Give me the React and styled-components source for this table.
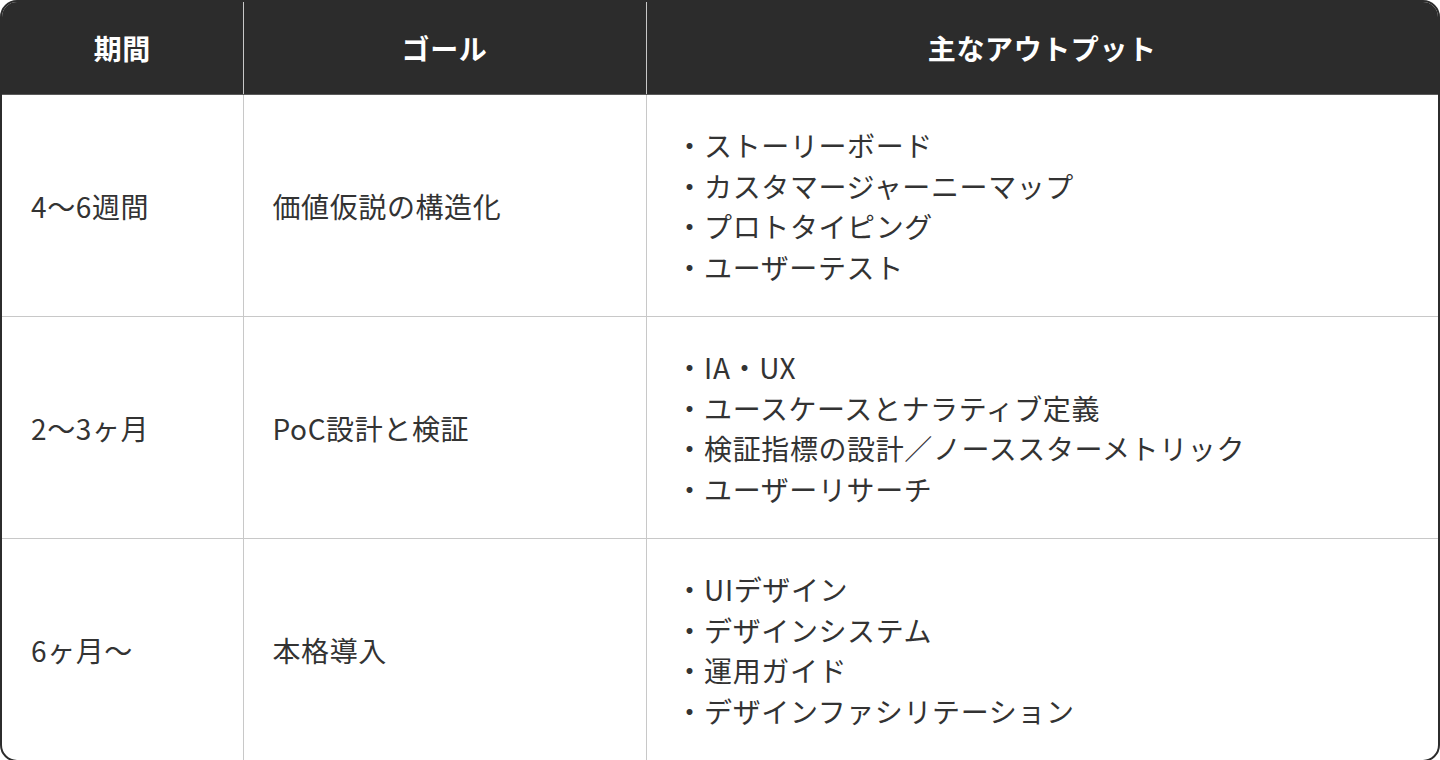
import styled, { createGlobalStyle } from "styled-components";

const GlobalStyle = createGlobalStyle`
  html, body {
    margin: 0;
    padding: 0;
    background: #fff;
  }
  body {
    font-family: "Noto Sans CJK JP", "Noto Sans", sans-serif;
  }
`;

const Frame = styled.div`
  width: 1440px;
  box-sizing: border-box;
  border: 2px solid #2c2c2c;
  border-radius: 17px;
  overflow: hidden;
  background: #fff;
`;

const Table = styled.table`
  width: 100%;
  border-collapse: collapse;
  table-layout: fixed;
`;

const HeadCell = styled.th`
  height: 92px;
  padding: 0;
  background: #2c2c2c;
  color: #fff;
  font-size: 28px;
  font-weight: 700;
  letter-spacing: 0.6px;
  text-align: center;
  border-bottom: 1px solid #5a5a5a;
  & + & {
    border-left: 1px solid #c8c8c8;
  }
`;

const Row = styled.tr`
  & + & td {
    border-top: 1px solid #c8c8c8;
  }
`;

const Cell = styled.td`
  padding: 30px 29px 29px;
  color: #333;
  font-size: 28px;
  line-height: 40.5px;
  letter-spacing: 0.6px;
  vertical-align: middle;
  & + & {
    border-left: 1px solid #c8c8c8;
  }
`;

const List = styled.ul`
  list-style: none;
  margin: 0;
  padding: 0;
`;

const Item = styled.li`
  &::before {
    content: "・";
  }
`;

const rows = [
  {
    period: "4〜6週間",
    goal: "価値仮説の構造化",
    outputs: ["ストーリーボード", "カスタマージャーニーマップ", "プロトタイピング", "ユーザーテスト"],
  },
  {
    period: "2〜3ヶ月",
    goal: "PoC設計と検証",
    outputs: ["IA・UX", "ユースケースとナラティブ定義", "検証指標の設計／ノーススターメトリック", "ユーザーリサーチ"],
  },
  {
    period: "6ヶ月〜",
    goal: "本格導入",
    outputs: ["UIデザイン", "デザインシステム", "運用ガイド", "デザインファシリテーション"],
  },
];

export default function App() {
  return (
    <>
      <GlobalStyle />
      <Frame>
        <Table>
          <colgroup>
            <col style={{ width: "241px" }} />
            <col style={{ width: "403px" }} />
            <col />
          </colgroup>
          <thead>
            <tr>
              <HeadCell>期間</HeadCell>
              <HeadCell>ゴール</HeadCell>
              <HeadCell>主なアウトプット</HeadCell>
            </tr>
          </thead>
          <tbody>
            {rows.map((r) => (
              <Row key={r.period}>
                <Cell>{r.period}</Cell>
                <Cell>{r.goal}</Cell>
                <Cell>
                  <List>
                    {r.outputs.map((o) => (
                      <Item key={o}>{o}</Item>
                    ))}
                  </List>
                </Cell>
              </Row>
            ))}
          </tbody>
        </Table>
      </Frame>
    </>
  );
}
